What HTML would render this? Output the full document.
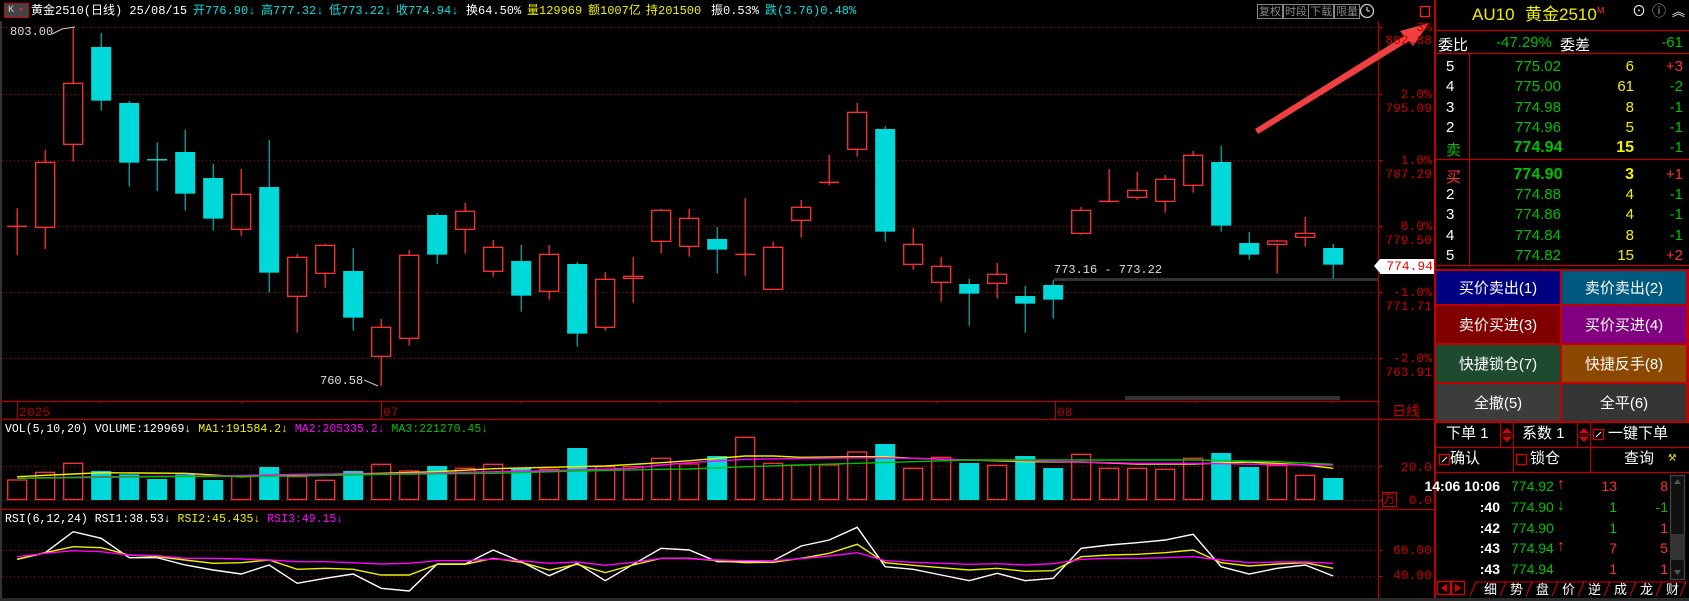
<!DOCTYPE html>
<html><head><meta charset="utf-8"><style>
*{margin:0;padding:0;box-sizing:border-box}
body{width:1689px;height:601px;background:#000;overflow:hidden;position:relative;font-family:"Liberation Mono","Noto Sans CJK SC",monospace;}
.a{position:absolute;white-space:nowrap;line-height:1}
.h{font-size:12px;top:5px}
.m{font-family:"Liberation Sans","Noto Sans CJK SC",sans-serif}
.btn{position:absolute;color:#fff;font-size:15px;display:flex;align-items:center;justify-content:center;font-family:"Liberation Sans","Noto Sans CJK SC",sans-serif}
.tb{position:absolute;top:4px;height:15px;border:1px solid #888;color:#888;font-size:11px;line-height:13px;padding:0 1px;font-family:"Noto Sans CJK SC",sans-serif}
.r{color:#ff3232}.g{color:#00c000}.y{color:#f0f000}.w{color:#fff}.c{color:#00e0e0}.mg{color:#ff00ff}.dr{color:#d00000}
.ax{font-size:13px;color:#c80000;text-align:right;width:60px;left:1372px}
.row{position:absolute;left:1436px;width:253px;height:20px;font-size:15px;font-family:"Liberation Sans","Noto Sans CJK SC",sans-serif}
.row span{position:absolute;top:2px;white-space:nowrap}
</style></head><body>
<svg id="s" width="1689" height="601" style="position:absolute;left:0;top:0"></svg>

<!-- header -->
<div class="a" style="left:4px;top:3px;width:25px;height:15px;border:1px solid #c00;background:#444;font-size:10px;color:#ccc;padding-left:3px;line-height:13px">K<span style="color:#f33;font-size:8px"> ▾</span></div>
<div class="a h w" style="left:31px">黄金2510(日线) 25/08/15</div>
<div class="a h c" style="left:193px">开776.90↓</div>
<div class="a h c" style="left:261px">高777.32↓</div>
<div class="a h c" style="left:329px">低773.22↓</div>
<div class="a h c" style="left:396px">收774.94↓</div>
<div class="a h w" style="left:466px">换64.50%</div>
<div class="a h y" style="left:527px">量129969</div>
<div class="a h y" style="left:588px">额1007亿</div>
<div class="a h y" style="left:646px">持201500</div>
<div class="a h w" style="left:711px">振0.53%</div>
<div class="a h c" style="left:765px">跌(3.76)0.48%</div>
<div class="tb" style="left:1257px">复权</div>
<div class="tb" style="left:1283px">时段</div>
<div class="tb" style="left:1308px">下载</div>
<div class="tb" style="left:1334px">限量</div>

<!-- axis labels -->
<div class="a ax" style="top:21px">3%</div>
<div class="a ax" style="top:34px">802.88</div>
<div class="a ax" style="top:88px">2.0%</div>
<div class="a ax" style="top:102px">795.09</div>
<div class="a ax" style="top:154px">1.0%</div>
<div class="a ax" style="top:168px">787.29</div>
<div class="a ax" style="top:220px">0.0%</div>
<div class="a ax" style="top:234px">779.50</div>
<div class="a ax" style="top:286px">-1.0%</div>
<div class="a ax" style="top:300px">771.71</div>
<div class="a ax" style="top:352px">-2.0%</div>
<div class="a ax" style="top:366px">763.91</div>
<div class="a" style="left:1380px;top:259px;width:54px;height:15px;background:#fff;color:#e00;font-size:13px;text-align:right;padding:1px 1px 0 0">774.94</div>
<div class="a m dr" style="left:1392px;top:404px;font-size:14px">日线</div>
<div class="a ax" style="top:461px">20.0</div>
<div class="a ax" style="top:494px">0.0</div>
<div class="a dr m" style="left:1382px;top:492px;width:15px;height:15px;border:1px solid #c00;font-size:12px;text-align:center;line-height:13px">万</div>
<div class="a ax" style="top:544px">60.00</div>
<div class="a ax" style="top:569px">40.00</div>

<div class="a w" style="left:10px;top:26px;font-size:12px;color:#ddd">803.00</div>
<div class="a" style="left:320px;top:375px;font-size:12px;color:#ddd">760.58</div>
<div class="a" style="left:1054px;top:264px;font-size:12px;color:#ddd">773.16 - 773.22</div>

<div class="a" style="left:5px;top:424px;font-size:11.5px"><span class="w">VOL(5,10,20) VOLUME:129969↓</span> <span class="y">MA1:191584.2↓</span> <span class="mg">MA2:205335.2↓</span> <span class="g">MA3:221270.45↓</span></div>
<div class="a" style="left:5px;top:514px;font-size:11.5px"><span class="w">RSI(6,12,24) RSI1:38.53↓</span> <span class="y">RSI2:45.435↓</span> <span class="mg">RSI3:49.15↓</span></div>

<!-- right panel -->
<div class="a m y" style="left:1472px;top:6px;font-size:17px">AU10</div>
<div class="a m y" style="left:1525px;top:6px;font-size:17px">黄金2510<sup style="color:#f33;font-size:9px">M</sup></div>
<div class="a w" style="left:1632px;top:6px;font-size:14px">⊙</div>
<div class="a" style="left:1652px;top:6px;font-size:14px;color:#aaa">ⓘ</div>
<div class="a w" style="left:1672px;top:6px;font-size:13px">︽</div>
<div class="row" style="top:32px"><span class="w" style="left:2px">委比</span><span class="g" style="left:60px">-47.29%</span><span class="w" style="left:124px">委差</span><span class="g" style="right:6px">-61</span></div>
<div id="ob"></div>
<div class="btn" style="left:1436px;top:271px;width:124px;height:33px;background:#000080">买价卖出(1)</div>
<div class="btn" style="left:1562px;top:271px;width:124px;height:33px;background:#005a80">卖价卖出(2)</div>
<div class="btn" style="left:1436px;top:306px;width:124px;height:37px;background:#800000">卖价买进(3)</div>
<div class="btn" style="left:1562px;top:306px;width:124px;height:37px;background:#800080">买价买进(4)</div>
<div class="btn" style="left:1436px;top:345px;width:124px;height:37px;background:#1e4a30">快捷锁仓(7)</div>
<div class="btn" style="left:1562px;top:345px;width:124px;height:37px;background:#8c4800">快捷反手(8)</div>
<div class="btn" style="left:1436px;top:384px;width:124px;height:37px;background:#3c3c3c">全撤(5)</div>
<div class="btn" style="left:1562px;top:384px;width:124px;height:37px;background:#353535">全平(6)</div>
<div class="a m w" style="left:1446px;top:426px;font-size:15px">下单 1</div>
<div class="a m w" style="left:1522px;top:426px;font-size:15px">系数 1</div>
<div class="a m w" style="left:1608px;top:426px;font-size:15px">一键下单</div>
<div class="a m w" style="left:1450px;top:451px;font-size:15px">确认</div>
<div class="a m w" style="left:1530px;top:451px;font-size:15px">锁仓</div>
<div class="a m w" style="left:1624px;top:451px;font-size:15px">查询</div>
<div class="a" style="left:1668px;top:451px;font-size:14px;color:#dd0">⚒</div>
<div id="tk"></div>
<div id="tabs"></div>

<script>
var S='';
function L(x1,y1,x2,y2,c,w,d){S+='<line x1="'+x1+'" y1="'+y1+'" x2="'+x2+'" y2="'+y2+'" stroke="'+c+'" stroke-width="'+(w||1)+'"'+(d?' stroke-dasharray="'+d+'"':'')+'/>';}
function R(x,y,w,h,f,st){S+='<rect x="'+x+'" y="'+y+'" width="'+w+'" height="'+h+'" fill="'+(f||'none')+'"'+(st?' stroke="'+st+'" stroke-width="1.3"':'')+'/>';}
var RED='#ff3232',CY='#00d9d9',DR='#b00000';
R(0,21,2,580,'#333');
[27,94,160,226,292,358,466,500,550,576].forEach(function(y){L(2,y+0.5,1378,y+0.5,DR,1,'1,3');L(1378,y+0.5,1383,y+0.5,DR,1);});
L(1378.5,21,1378.5,601,DR,1.3);
L(0,401.5,1378,401.5,DR,1.2);L(0,419.5,1435,419.5,DR,1.2);L(0,509.5,1435,509.5,DR,1.2);
L(1435,0,1435,601,'#c00000',2);
R(1125,396,215,4,'#333');
R(1054,278,324,3,'#333');
[17,381,1055].forEach(function(x){L(x+0.5,401,x+0.5,419,DR,1.2);});
[101,242,521,660,797,937,1195,1333].forEach(function(x){L(x,401,x,404,DR,1);});
S+='<text x="19" y="416" fill="'+DR+'" font-size="13" font-family="Liberation Mono">2025</text>';
S+='<text x="383" y="416" fill="'+DR+'" font-size="13" font-family="Liberation Mono">07</text>';
S+='<text x="1057" y="416" fill="'+DR+'" font-size="13" font-family="Liberation Mono">08</text>';
var C=[['r',565,619,620,705],['r',390,427,622,687],['r',22,190,373,425],['c',39,81,242,272],['c',243,249,428,500],['c',367,417,419,513],['c',330,396,521,572],['c',432,474,596,632],['r',447,523,628,647],['c',360,501,758,818],['r',702,712,829,938],['r',672,676,760,803],['c',684,753,893,932],['r',897,922,1009,1098],['r',690,706,955,977],['c',579,585,704,731],['r',549,574,628,701],['r',660,682,754,770],['c',675,723,827,875],['r',675,703,814,839],['c',726,732,941,980],['r',756,778,922,932],['r',711,769,775,848],['r',567,571,664,700],
['r',567,595,679,710],['c',621,657,689,761],['r',534,703,704,767],['r',666,682,808,808],['r',540,562,601,653],['r',405,487,488,496],['r',249,277,388,410],['c',318,327,635,665],['r',623,673,733,749],['r',711,739,787,845],['c',777,792,821,917],['r',729,763,790,835],['c',798,828,851,938],['c',780,795,839,896],['r',561,571,640,644],['r',447,544,545,544],['r',456,511,532,539],['r',465,478,544,578],['r',393,406,496,518],['c',378,426,617,635],['c',636,669,704,719],['r',660,663,673,761],['r',591,640,652,680],['c',672,684,734,776]];
function Y(v){return 20+v/3;}
function X(k){return 17.2+28*k;}
C.forEach(function(c,k){var x=X(k),col=c[0]=='r'?RED:CY,wt=Y(c[1]),bt=Y(c[2]),bb=Y(c[3]),wb=Y(c[4]);
 if(c[0]=='c'){L(x,wt,x,wb,col,1);R(x-10,bt,20,Math.max(bb-bt,1.5),col);}
 else{ if(bb-bt<1.5){L(x,wt,x,wb,col,1.3);L(x-10,bt,x+10,bt,col,1.5);}
 else{L(x,wt,x,bt,col,1.3);L(x,bb,x,wb,col,1.3);R(x-9.5,bt,19,bb-bt,'none',col);}}});
L(52,34,62,29,'#ccc',1);L(62,29,75,27,'#ccc',1);
L(364,380,378,386,'#ccc',1);
var V=[['r',330],['r',307],['r',280],['c',303],['c',313],['c',327],['c',313],['c',330],['r',320],['c',291],['r',320],['r',331],['c',303],['r',283],['r',303],['c',288],['r',295],['r',283],['c',293],['r',298],['c',234],['r',290],['r',290],['r',265],['r',282],['c',258],['r',202],['r',280],['r',285],['r',285],['r',246],['c',222],['r',295],['r',262],['c',279],['r',286],['c',258],['c',294],['r',253],['r',295],['r',295],['r',298],['r',265],['c',249],['c',291],['r',286],['r',316],['c',324]];
function YV(v){return 370+v/3;}
V.forEach(function(v,k){var x=X(k),t=YV(v[1]);if(v[0]=='c')R(x-10,t,20,500-t,CY);else R(x-9.5,t,19,499.5-t,'none',RED);});
function PL(pts,col,f){var p=pts.map(function(a){return X(a[0]).toFixed(1)+','+f(a[1]).toFixed(1);}).join(' ');S+='<polyline points="'+p+'" fill="none" stroke="'+col+'" stroke-width="1.4"/>';}
PL([[0,320],[2,312],[3,308],[6,310],[8,320],[9,316],[13,310],[15,305],[17,296],[19,292],[21,288],[23,278],[24,272],[26,258],[27,258],[28,262],[30,260],[31,260],[32,265],[36,275],[38,276],[40,282],[42,282],[44,276],[46,285],[47,295]],'#f0f000',YV);
PL([[0,325],[3,320],[7,318],[10,313],[13,312],[16,307],[19,302],[22,295],[23,285],[24,278],[26,268],[30,263],[32,265],[34,270],[36,272],[40,280],[42,280],[46,285],[47,285]],'#ff00ff',YV);
PL([[0,325],[5,320],[10,318],[13,313],[17,310],[20,303],[23,298],[24,297],[26,290],[28,285],[30,280],[32,275],[34,270],[38,270],[42,270],[45,275],[47,283]],'#00c000',YV);
function arr(a){return a.map(function(v,i){return [i,v];});}
PL(arr([568,548,485,505,563,563,585,600,612,585,640,625,612,655,663,582,582,540,575,617,580,632,583,535,540,575,575,572,528,510,472,590,598,615,632,610,632,625,535,525,518,510,493,590,612,595,585,618]),'#fff',YV);
PL(arr([568,548,530,533,555,560,570,580,578,570,598,595,598,615,615,583,583,565,577,600,583,608,585,565,565,572,578,577,565,550,523,578,586,593,600,595,604,602,560,555,553,548,540,578,588,582,578,595]),'#f0f000',YV);
PL(arr([560,550,542,545,555,557,565,565,567,570,575,575,578,582,580,572,572,567,572,580,576,586,577,565,566,570,572,572,566,558,548,572,577,580,583,581,585,581,568,565,565,563,560,570,578,576,576,580]),'#ff00ff',YV);
S+='<polygon points="1255,129 1404,36 1400,31 1429,23 1413,46 1409,41 1258,134" fill="#f04040"/>';
R(1420.5,6.5,9,10,'none','#ff2020');
S+='<circle cx="1367" cy="11" r="6.5" fill="none" stroke="#ccc" stroke-width="1.3"/>';L(1367,7,1367,11,'#ccc',1.2);L(1367,11,1370,11,'#ccc',1.2);
S+='<polygon points="1380,259 1374,266 1380,273" fill="#fff"/>';
var PR='#c00000';
L(1435,30.5,1689,30.5,PR,1.3);L(1435,53.5,1689,53.5,PR,1.3);L(1469.5,53,1469.5,265,PR,1);L(1435,159.5,1689,159.5,PR,1.3);L(1435,265.5,1689,265.5,PR,1.3);
R(1435,269,254,154,PR);
L(1435,422.5,1689,422.5,PR,1.3);L(1435,447.5,1689,447.5,PR,1.3);L(1435,472.5,1689,472.5,PR,1.3);
L(1500.5,423,1500.5,447,PR,1);L(1513.5,423,1513.5,472,PR,1);L(1577.5,423,1577.5,447,PR,1);L(1590.5,423,1590.5,472,PR,1);
[1507,1584].forEach(function(x){S+='<polygon points="'+(x-5)+',433 '+(x+5)+',433 '+x+',428" fill="#d00"/><polygon points="'+(x-5)+',437 '+(x+5)+',437 '+x+',442" fill="#d00"/>';L(x-6,435,x+6,435,PR,1);});
R(1593.5,429.5,10,10,'none','#d00');L(1596,437,1601,432,'#fff',1);
R(1439.5,454.5,10,10,'none','#d00');L(1442,462,1447,457,'#fff',1);
R(1516.5,454.5,10,10,'none','#d00');
R(1670,475,15,105,'#111');R(1670.5,475.5,14,104,'none','#444');R(1670,534,15,26,'#333');
S+='<polygon points="1674,484 1681,484 1677.5,479" fill="#555"/><polygon points="1674,570 1681,570 1677.5,575" fill="#555"/>';
R(1437.5,581.5,13,13,'none','#d00');R(1451.5,581.5,13,13,'none','#d00');
S+='<polygon points="1447,584 1447,592 1441,588" fill="#d00"/><polygon points="1455,584 1455,592 1461,588" fill="#d00"/>';
S+='<polyline points="1470,596 1476,582 1686,582 1680,596" fill="none" stroke="#d00" stroke-width="1"/>';
for(var i=1;i<8;i++){var xx=1474+26*i;L(xx,596,xx+6,582,'#d00',1);}
R(0,598,1689,3,'#2a2a2a');
document.getElementById('s').innerHTML=S;

var ob=[['5','775.02','6','+3','w'],['4','775.00','61','-2','w'],['3','774.98','8','-1','w'],['2','774.96','5','-1','w'],['卖','774.94','15','-1','g',1],
['买','774.90','3','+1','r',1],['2','774.88','4','-1','w'],['3','774.86','4','-1','w'],['4','774.84','8','-1','w'],['5','774.82','15','+2','w']];
var h='';ob.forEach(function(o,i){var t=i<5?56+i*20.3:164+(i-5)*20.2;var b=o[5]?'font-weight:bold;font-size:16px;':'';
h+='<div class="row" style="top:'+t+'px"><span class="'+o[4]+'" style="left:10px">'+o[0]+'</span><span class="g" style="left:67px;width:70px;text-align:center;'+b+'">'+o[1]+'</span><span class="y" style="right:55px;'+b+'">'+o[2]+'</span><span class="'+(o[3][0]=='+'?'r':'g')+'" style="right:6px">'+o[3]+'</span></div>';});
document.getElementById('ob').innerHTML=h;
var tk=[['14:06 10:06','774.92','↑','r','13','r','8','r'],[':40','774.90','↓','g','1','g','-1','g'],[':42','774.90','','','1','g','1','r'],[':43','774.94','↑','r','7','r','5','r'],[':43','774.94','','','1','r','1','r']];
h='';tk.forEach(function(o,i){var t=476+i*20.8;
h+='<div class="row" style="top:'+t+'px;font-size:14px"><span class="w" style="right:189px;font-weight:bold">'+o[0]+'</span><span class="g" style="left:75px">'+o[1]+'</span><span class="'+o[3]+'" style="left:121px;font-size:16px;top:0">'+o[2]+'</span><span class="'+o[5]+'" style="right:72px">'+o[4]+'</span><span class="'+o[7]+'" style="right:21px">'+o[6]+'</span></div>';});
document.getElementById('tk').innerHTML=h;
h='';'细势盘价逆成龙财'.split('').forEach(function(c,i){h+='<div class="a m w" style="left:'+(1484+26*i)+'px;top:583px;font-size:13px">'+c+'</div>';});
document.getElementById('tabs').innerHTML=h;
</script>
</body></html>
